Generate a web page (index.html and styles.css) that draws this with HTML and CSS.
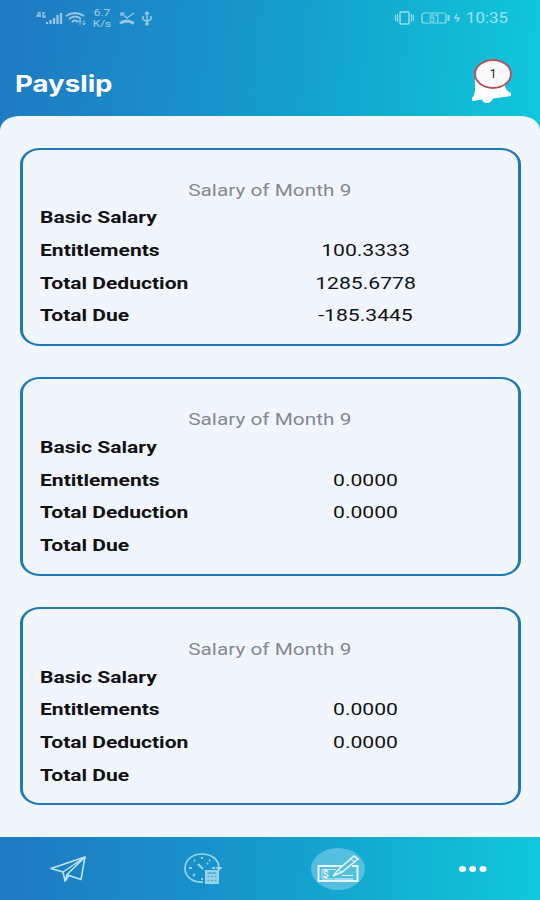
FILE: index.html
```html
<!DOCTYPE html>
<html lang="en">
<head>
    <meta charset="UTF-8">
    <meta name="viewport" content="width=device-width, initial-scale=1.0">
    <title>Payslip</title>
    <link rel="stylesheet" href="styles.css">
</head>
<body>
    <header class="header">
        <div class="status-bar">
            <svg class="status-icons" width="52" height="20" viewBox="0 0 52 20" fill="none" stroke="#fff">
                <path d="M3 4L1 8h4M4 4v5M9 5H7v4h2V7" stroke-width="1.300"/>
                <path d="M11 16v-2M14.500 16v-4M18 16v-6M21.500 16V7M25 16V5" stroke-width="2.300"/>
                <path d="M30 8q9-6 18 0M33 11q6-5 12 0M36 14q3-3 6 0" stroke-width="2"/>
                <path d="M44 12v5M42.500 14l1.500-2 1.500 2M48 12v5M46.500 15l1.500 2 1.500-2" stroke-width="1"/>
            </svg>
            <div class="speed">
                <span>6.7</span>
                <span>K/s</span>
            </div>
            <svg class="status-icons missed" width="36" height="20" viewBox="0 0 36 20" fill="none" stroke="#fff">
                <path d="M1 15.500q6.500-5 14 0" stroke-width="2.800"/>
                <path d="M2 8V5h4M2 5l6 5 7-5" stroke-width="1.200"/>
                <path d="M28 5v12M24 8v3l4 3 4-3V8M26 6l2-2 2 2" stroke-width="1.500"/>
                <circle cx="28" cy="16" r="1.300" fill="#fff"/>
            </svg>
            <svg class="status-icons battery" width="68" height="20" viewBox="0 0 68 20" fill="none" stroke="#fff">
                <rect x="6" y="4" width="9" height="12" rx="1" stroke-width="1.600"/>
                <path d="M1.500 7v6M3.500 6v8M17.500 6v8M19.500 7v6" stroke-width="1.200"/>
                <rect x="28" y="5" width="24" height="10" rx="2" stroke-width="1.200"/>
                <path d="M54.500 7v6" stroke-width="2"/>
                <path d="M63 6l-2 4h4l-2 4" stroke-width="1.500"/>
                <text class="battery-text" x="35" y="14">81</text>
            </svg>
            <span class="clock">10:35</span>
        </div>
        <div class="title-bar">
            <h1>Payslip</h1>
            <div class="bell">
                <svg width="42" height="33" viewBox="0 0 42 33" fill="#fff">
                    <path d="M4 6Q9 -1 19 0Q33 1 34 15Q35 20 40 22V25L22 27.500Q20 32 15.500 32Q12 32 11 28.500L1 30V27Q4 24 4 19Z"/>
                </svg>
                <span class="badge">1</span>
            </div>
        </div>
    </header>

    <main class="content">
        <section class="card">
            <h2><span>Salary of Month 9</span></h2>
            <div class="row"><b>Basic Salary</b></div>
            <div class="row"><b>Entitlements</b><span>100.3333</span></div>
            <div class="row"><b>Total Deduction</b><span>1285.6778</span></div>
            <div class="row"><b>Total Due</b><span>-185.3445</span></div>
        </section>
        <section class="card">
            <h2><span>Salary of Month 9</span></h2>
            <div class="row"><b>Basic Salary</b></div>
            <div class="row"><b>Entitlements</b><span>0.0000</span></div>
            <div class="row"><b>Total Deduction</b><span>0.0000</span></div>
            <div class="row"><b>Total Due</b></div>
        </section>
        <section class="card">
            <h2><span>Salary of Month 9</span></h2>
            <div class="row"><b>Basic Salary</b></div>
            <div class="row"><b>Entitlements</b><span>0.0000</span></div>
            <div class="row"><b>Total Deduction</b><span>0.0000</span></div>
            <div class="row"><b>Total Due</b></div>
        </section>
    </main>

    <nav class="tabs">
        <a class="tab">
            <svg width="38" height="28" viewBox="0 0 38 28" fill="none" stroke="#c3e5f1" stroke-width="1.500" stroke-linejoin="round">
                <path d="M2 13.500L36 2L32 24.500L20 20.500L16 26L14 17Z"/>
                <path d="M14 17L36 2L18 19.500L16 26M18 19.500L20 20.500"/>
            </svg>
        </a>
        <a class="tab">
            <svg width="40" height="34" viewBox="0 0 40 34" fill="none" stroke="#98d3e8" stroke-width="1.700">
                <path d="M20 30C9 31 2 24 2 16.500C2 8 9 2 19 2S36 8 36 16"/>
                <path d="M32 15h8l-4 4z" fill="#98d3e8" stroke="none"/>
                <path d="M15 12l5 5" stroke-width="2"/>
                <path d="M19 5v2M11 8l1 1M27 8l-1 1M6 16h3M29 16h3M10 24l2-2M19 28v-2M25 11l-1 1" stroke-width="2"/>
                <rect x="22" y="18" width="14" height="14" fill="#98d3e8" stroke="none"/>
                <path d="M24.500 21h9M24.500 24.500h2M28 24.500h2M31.500 24.500h2M24.500 28.500h2M28 28.500h2M31.500 28.500h2" stroke="#4babd0" stroke-width="1.300"/>
            </svg>
        </a>
        <a class="tab">
            <span class="active">
                <svg width="44" height="30" viewBox="0 0 44 30" fill="none" stroke="#e6f7fb" stroke-width="2">
                    <path d="M30 12H2.500v15h39V12H36"/>
                    <path d="M6 24V15.500h14M6 25h13" stroke-width="0.800"/>
                    <path d="M26 21.500h11M19 25h18" stroke-width="1.200"/>
                    <path d="M17 22l5-6L38 2l4 3L26 18Z" fill="#58bfdf" stroke-width="1.600"/>
                    <path d="M35 5l4 3M22 16l4 2.500" stroke-width="1"/>
                    <text class="dollar" x="6.500" y="24">$</text>
                </svg>
            </span>
        </a>
        <a class="tab">
            <svg width="30" height="8" viewBox="0 0 30 8" fill="#fff">
                <ellipse cx="4.500" cy="4" rx="3.500" ry="3"/>
                <ellipse cx="14.700" cy="4" rx="3.500" ry="3"/>
                <ellipse cx="25" cy="4" rx="3.500" ry="3"/>
            </svg>
        </a>
    </nav>
</body>
</html>
```

FILE: styles.css
```css
* {
    box-sizing: border-box;
}

body {
    font-family: Roboto, sans-serif;
    margin: 0;
    height: 900px;
    display: flex;
    flex-direction: column;
    overflow: hidden;
    background: #f1f6fe;
}

/* 16px deeper than it looks, so the gradient shows behind the rounded corners */
.header {
    height: 132px;
    flex-shrink: 0;
    margin-bottom: -16px;
    background: linear-gradient(95deg, #1f7ac2 1%, #1990cb 36%, #149dce 52%, #12b3d3 78%, #11c5da 97%);
}

.status-bar {
    display: flex;
    align-items: center;
    height: 36px;
    padding: 0 32px 0 36px;
    color: rgba(255, 255, 255, 0.6);
}

.status-icons {
    opacity: 0.55;
}

.speed {
    display: flex;
    flex-direction: column;
    width: 20px;
    margin-left: 4px;
    text-align: center;
    font-size: 9.5px;
    line-height: 11px;
}

.speed span {
    transform: scaleX(1.25);
}

.missed {
    margin-left: 7px;
}

.battery {
    margin-left: auto;
}

.battery-text {
    font-size: 10px;
    fill: #fff;
    stroke: none;
}

.clock {
    width: 42px;
    margin-left: 4px;
    font-size: 14px;
    white-space: nowrap;
    transform: scaleX(1.2);
    transform-origin: left;
}

.title-bar {
    display: flex;
    justify-content: space-between;
    align-items: flex-start;
    padding: 23px 27px 0 15px;
}

h1 {
    margin: 10px 0 0;
    font-family: Inter, sans-serif;
    font-size: 23px;
    line-height: 30px;
    font-weight: 700;
    color: #fff;
    transform: scaleX(1.2);
    transform-origin: left;
}

.bell {
    position: relative;
    height: 44px;
    padding-top: 12px;
}

.badge {
    position: absolute;
    left: 3px;
    top: 0;
    width: 38px;
    height: 30px;
    border: 2px solid #b5525c;
    border-radius: 50%;
    background: #fbfafa;
    color: #222;
    font-size: 12px;
    line-height: 27px;
    text-align: center;
}

.content {
    position: relative;
    height: 721px;
    flex-shrink: 0;
    padding: 31.5px 19.500px 0 20px;
    display: flex;
    flex-direction: column;
    gap: 31.300px;
    background: #f1f6fe;
    border-radius: 20px 20px 0 0 / 14px 14px 0 0;
}

.card {
    height: 198.400px;
    padding: 29px 18px 0 17px;
    border: 2px solid #1f79b6;
    border-width: 2px 3px;
    border-radius: 20px / 16px;
}

.card h2 {
    margin: 0;
    font-size: 16px;
    line-height: 24px;
    font-weight: 400;
    color: #85888e;
    text-align: center;
}

.card h2 span {
    display: inline-block;
    transform: scaleX(1.3);
}

.row {
    display: grid;
    grid-template-columns: 192px 267px;
    align-items: center;
    height: 32.700px;
    font-size: 16px;
    color: #111;
}

.row:nth-child(2) {
    margin-top: -1px;
}

.row b {
    transform: scaleX(1.315);
    transform-origin: left;
    white-space: nowrap;
}

.row span {
    text-align: center;
    transform: scaleX(1.32);
}

.tabs {
    display: grid;
    grid-template-columns: repeat(4, 1fr);
    height: 63px;
    flex-shrink: 0;
    background: linear-gradient(93deg, #1f7ac2 1%, #1990cb 36%, #149dce 52%, #12b3d3 76%, #11c5da 97%);
}

.tab {
    display: flex;
    align-items: center;
    justify-content: center;
}

.active {
    display: flex;
    align-items: center;
    justify-content: center;
    width: 54px;
    height: 42px;
    border-radius: 50%;
    background: rgba(150, 215, 240, 0.5);
}

.dollar {
    font-size: 11px;
    font-weight: 700;
    fill: #e6f7fb;
    stroke: none;
}
```
